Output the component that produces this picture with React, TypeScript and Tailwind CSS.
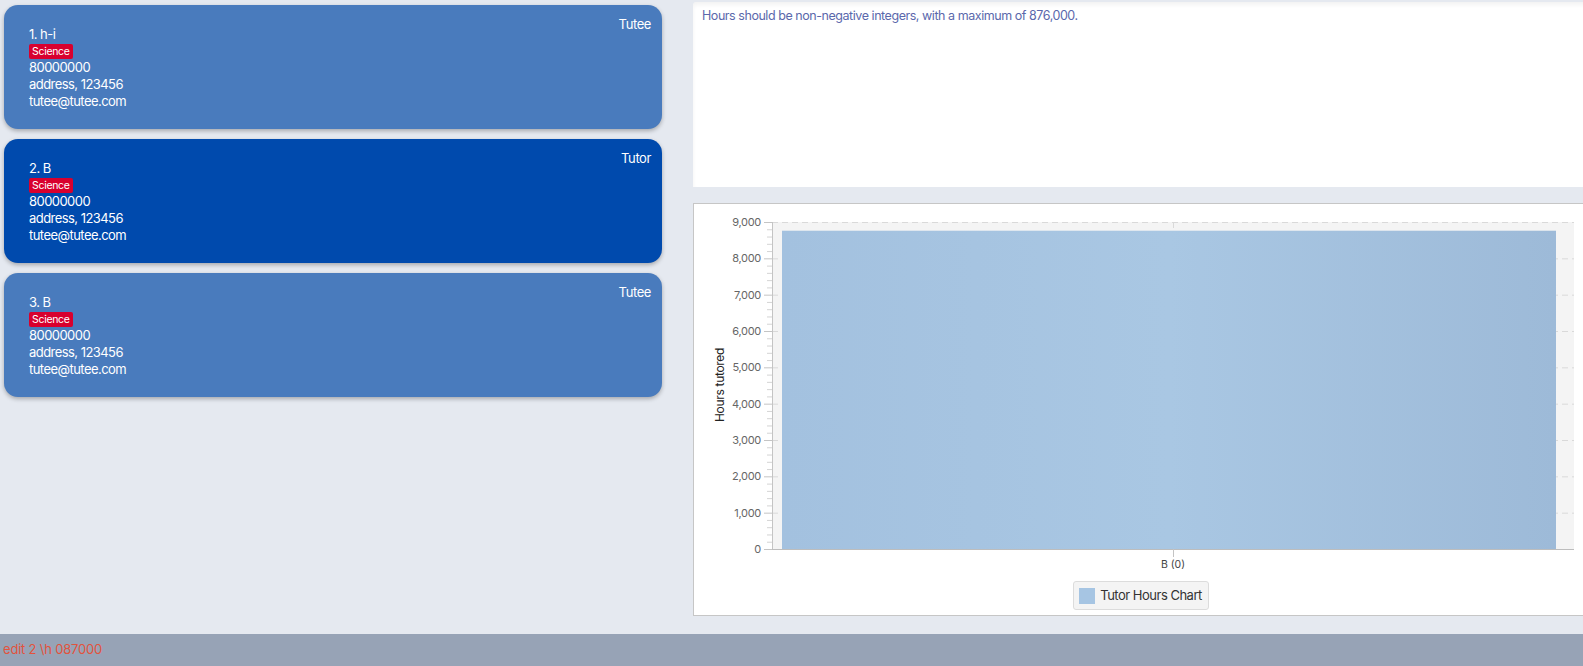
import React from "react";

type Person = { idx: number; name: string; role: string; selected?: boolean };

const people: Person[] = [
  { idx: 1, name: "h-i", role: "Tutee" },
  { idx: 2, name: "B", role: "Tutor", selected: true },
  { idx: 3, name: "B", role: "Tutee" },
];

function Card({ p }: { p: Person }) {
  return (
    <div
      className={`flex h-[124px] w-[658px] shrink-0 items-start justify-between rounded-[14px] pl-[25px] pr-[11px] pt-[11px] text-white shadow-[0_2px_4px_rgba(0,0,0,0.28)] ${
        p.selected ? "bg-[#004aad]" : "bg-[#497bbd]"
      }`}
    >
      <div className="flex flex-col pt-[10px] text-[13px] leading-[17px] tracking-[-0.55px]">
        <div>
          {p.idx}. {p.name}
        </div>
        <div className="flex h-[16px] items-start">
          <span className="mt-[0.5px] rounded-[2px] bg-[#d8002e] px-[3px] text-[10.5px] leading-[15px] tracking-[-0.3px]">
            Science
          </span>
        </div>
        <div>80000000</div>
        <div>address, 123456</div>
        <div>tutee@tutee.com</div>
      </div>
      <div className="text-[13px] leading-[17px] tracking-[-0.4px]">{p.role}</div>
    </div>
  );
}

function Chart() {
  const top = 18;
  const bottom = 345;
  const left = 78;
  const right = 880;
  const per = (bottom - top) / 9000;
  const majors = Array.from({ length: 10 }, (_, i) => i * 1000);
  const minors: number[] = [];
  for (let v = 0; v <= 9000; v += 200) if (v % 1000 !== 0) minors.push(v);
  const y = (v: number) => bottom - v * per;
  const barTop = y(8760);
  return (
    <svg width="896" height="372" className="block">
      <defs>
        <linearGradient id="barg" x1="0" x2="1" y1="0" y2="0">
          <stop offset="0" stopColor="#a3c1df" />
          <stop offset="0.5" stopColor="#a9c7e3" />
          <stop offset="1" stopColor="#9dbad8" />
        </linearGradient>
      </defs>
      <rect x={left} y={top} width={right - left} height={bottom - top} fill="#f4f4f4" />
      {majors.map((v) => (
        <line
          key={"g" + v}
          x1={left}
          x2={right}
          y1={y(v) + 0.5}
          y2={y(v) + 0.5}
          stroke="#d9d9d9"
          strokeDasharray="6 4"
        />
      ))}
      <line x1={479.5} x2={479.5} y1={top} y2={bottom} stroke="#d9d9d9" strokeDasharray="6 4" />
      <rect x={88} y={barTop} width={862 - 88} height={bottom - barTop} fill="url(#barg)" />
      <line x1={left + 0.5} x2={left + 0.5} y1={top} y2={bottom} stroke="#c4c4c4" />
      <line x1={left} x2={right} y1={bottom + 0.5} y2={bottom + 0.5} stroke="#bdbdbd" />
      {majors.map((v) => (
        <g key={"m" + v}>
          <line x1={70} x2={left} y1={y(v) + 0.5} y2={y(v) + 0.5} stroke="#c4c4c4" />
          <text
            x={67}
            y={y(v) + 4}
            textAnchor="end"
            fontSize="11"
            fill="#666"
            letterSpacing="-0.3"
            fontFamily="Inter, sans-serif"
          >
            {v.toLocaleString("en-US")}
          </text>
        </g>
      ))}
      {minors.map((v) => (
        <line key={"n" + v} x1={73} x2={left} y1={y(v) + 0.5} y2={y(v) + 0.5} stroke="#d4d4d4" />
      ))}
      <line x1={479.5} x2={479.5} y1={bottom} y2={bottom + 8} stroke="#c4c4c4" />
      <text x={479} y={364} textAnchor="middle" fontSize="10.5" fill="#444" fontFamily="Inter, sans-serif">
        B (0)
      </text>
      <text
        x={0}
        y={0}
        transform="translate(30 181) rotate(-90)"
        textAnchor="middle"
        fontSize="12"
        fill="#222"
        letterSpacing="-0.3"
        fontFamily="Inter, sans-serif"
      >
        Hours tutored
      </text>
    </svg>
  );
}

export default function App() {
  return (
    <div
      className="flex h-[666px] w-[1583px] flex-col overflow-hidden bg-[#e5e9f0]"
      style={{ fontFamily: "Inter, 'Noto Sans', sans-serif" }}
    >
      <div className="flex h-[634px] shrink-0">
        <div className="flex w-[665px] shrink-0 flex-col gap-[10px] pl-[4px] pt-[5px]">
          {people.map((p) => (
            <Card key={p.idx} p={p} />
          ))}
        </div>
        <div className="flex w-[930px] shrink-0 flex-col pl-[28px] pt-[2px]">
          <div className="h-[185px] w-[896px] rounded-tl-[3px] bg-white px-[9px] pt-[6px] text-[12.5px] leading-[16px] tracking-[-0.45px] text-[#5b68ac] shadow-[inset_0_3px_4px_rgba(0,0,0,0.05)]">
            Hours should be non-negative integers, with a maximum of 876,000.
          </div>
          <div className="mt-[16px] flex h-[413px] w-[896px] flex-col border border-[#c6c6c6] bg-white">
            <Chart />
            <div className="flex justify-center">
              <div className="mt-[5px] flex h-[29px] items-center gap-[5px] rounded-[3px] border border-[#dcdcdc] bg-[#f4f4f4] pl-[5px] pr-[6px] text-[13px] tracking-[-0.5px] text-[#333]">
                <span className="h-[16px] w-[16px] bg-[#a6c5e3]" />
                <span>Tutor Hours Chart</span>
              </div>
            </div>
          </div>
        </div>
      </div>
      <div className="flex h-[32px] shrink-0 items-center bg-[#97a3b6] pl-[3px] text-[13px] tracking-[-0.2px] text-[#e2533d]">
        edit 2 \h 087000
      </div>
    </div>
  );
}
